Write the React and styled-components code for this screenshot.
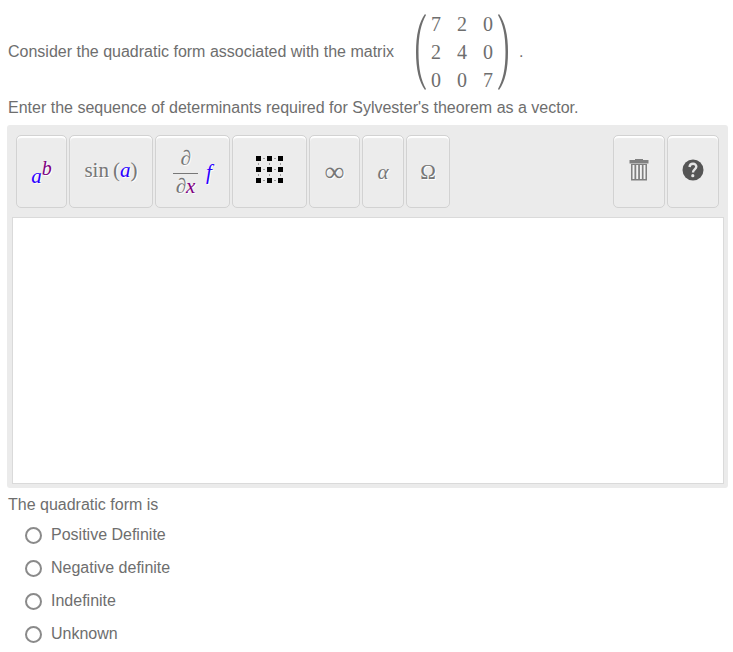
import React, { useState } from "react";
import styled, { createGlobalStyle } from "styled-components";

const GlobalStyle = createGlobalStyle`
  * {
    box-sizing: border-box;
  }

  body {
    margin: 0;
    background: #fff;
    color: #6e6e6e;
    font-family: "Liberation Sans", Arial, sans-serif;
    font-size: 16px;
    line-height: 24px;
  }
`;

const Page = styled.main`
  padding: 13px 5px 0 8px;
`;

const Statement = styled.div`
  display: flex;
  align-items: center;
  gap: 10px;
  height: 78px;
`;

const Prompt = styled.p`
  margin: 0;
  padding: ${({ $top }) => $top || 0}px 0 0;
`;

const MatrixBox = styled.div`
  display: flex;
  align-items: center;
  gap: 3px;
  padding-left: 11px;
`;

const Matrix = styled.div`
  display: grid;
  grid-template-columns: repeat(3, 14px);
  grid-auto-rows: 28px;
  column-gap: 12px;
  justify-items: center;
  align-items: center;
  font-family: "Liberation Serif", "Times New Roman", serif;
  font-size: 20px;
`;

const Editor = styled.section`
  margin: 5px 0 0 -1px;
  padding: 10px 4px 4px 5px;
  background: #ebebeb;
  border-radius: 3px;
`;

const Toolbar = styled.div`
  display: flex;
  justify-content: space-between;
  padding: 0 5px 9px 4px;
`;

const ToolGroup = styled.div`
  display: flex;
  gap: 2px;
`;

const ToolButton = styled.button`
  display: flex;
  align-items: center;
  justify-content: center;
  width: ${({ $width }) => $width}px;
  height: 73px;
  padding: 0 0 ${({ $raised }) => ($raised ? 4 : 0)}px;
  color: #777;
  background: #ececec;
  border: 1px solid #d2d2d2;
  border-radius: 5px;
  box-shadow: inset 0 2px 1px #fff;
  font-family: "Liberation Serif", "Times New Roman", serif;
  font-size: ${({ $large }) => ($large ? 28 : 21)}px;
  line-height: 24px;
  text-shadow: 1px 1px 0 #fff;
  cursor: pointer;
`;

const Variable = styled.i`
  color: ${({ $second }) => ($second ? "#800080" : "#2b00ff")};
`;

const Power = styled.sup`
  align-self: center;
  padding-bottom: 8px;
  font-size: 20px;
  line-height: 20px;
`;

const Base = styled.span`
  padding-top: 8px;
`;

const Fraction = styled.span`
  display: flex;
  flex-direction: column;
  align-items: center;
  width: 25px;
  margin-right: 8px;
`;

const Numerator = styled.span`
  width: 100%;
  height: 28px;
  border-bottom: 1px solid #777;
`;

const InputArea = styled.textarea`
  display: block;
  width: 100%;
  height: 267px;
  padding: 8px;
  background: #fff;
  border: 1px solid #dadada;
  border-radius: 0;
  outline: none;
  resize: none;
  font: inherit;
  color: inherit;
`;

const Choices = styled.fieldset`
  margin: 0;
  padding: 6px 0 0;
  border: 0;
`;

const Legend = styled.legend`
  padding: 5px 0 0;
`;

const Choice = styled.label`
  display: flex;
  align-items: center;
  gap: 9px;
  width: fit-content;
  margin: 0 0 9px 17px;
`;

const Radio = styled.input`
  appearance: none;
  width: 17px;
  height: 17px;
  margin: 0;
  background: #fff;
  border: 2px solid #8a8a8a;
  border-radius: 50%;

  &:checked {
    background: #767676;
    box-shadow: inset 0 0 0 3px #fff;
  }
`;

const values = [7, 2, 0, 2, 4, 0, 0, 0, 7];
const answers = ["Positive Definite", "Negative definite", "Indefinite", "Unknown"];

const Bracket = ({ right }) => (
  <svg width="11" height="76" viewBox="0 0 11 76" aria-hidden="true">
    <path
      transform={right ? "translate(11 0) scale(-1 1)" : undefined}
      d="M10 0C4 8 1 21 1 38s3 30 9 38l1-1C6 66 3.500 55 3.500 38S6 10 11 1z"
      fill="#6e6e6e"
    />
  </svg>
);

const MatrixIcon = () => (
  <svg width="28" height="28" viewBox="0 0 28 28" aria-hidden="true">
    {[0, 11, 22].map((y) =>
      [0, 11, 22].map((x) => (
        <rect key={`${x}-${y}`} x={x} y={y} width="5" height="5" fill="#000" />
      ))
    )}
    {[0, 11, 22].map((a) =>
      [7, 18].map((b) => (
        <g key={`${a}-${b}`} fill="#999">
          <rect x={b} y={a + 2} width="2" height="1" />
          <rect x={a + 2} y={b} width="1" height="2" />
        </g>
      ))
    )}
  </svg>
);

const TrashIcon = () => (
  <svg width="20" height="23" viewBox="0 0 20 23" aria-hidden="true">
    <path d="M6 2V1h8v1h5.500v3.500H.5V2z" fill="#808080" />
    <path d="M2 6h16v16.500H2z" fill="#808080" />
    <path d="M4.500 7v14M8.200 7v14M11.900 7v14M15.500 7v14" stroke="#f3f3f3" strokeWidth="1.900" />
  </svg>
);

const HelpIcon = () => (
  <svg width="22" height="22" viewBox="0 0 22 22" aria-hidden="true">
    <circle cx="11" cy="11" r="10.500" fill="#555" />
    <path
      d="M7.500 8C8 3.500 14.500 4 14.300 7.800c-.1 2.700-3.300 2.700-3.300 5.700"
      fill="none"
      stroke="#e4e4e4"
      strokeWidth="2.400"
    />
    <circle cx="10.800" cy="16.700" r="1.600" fill="#e4e4e4" />
  </svg>
);

const App = () => {
  const [answer, setAnswer] = useState("");

  return (
    <Page>
      <GlobalStyle />
      <Statement>
        <Prompt>Consider the quadratic form associated with the matrix</Prompt>
        <MatrixBox>
          <Bracket />
          <Matrix>
            {values.map((value, index) => (
              <span key={index}>{value}</span>
            ))}
          </Matrix>
          <Bracket right />
        </MatrixBox>
        <span>.</span>
      </Statement>
      <Prompt $top={5}>
        Enter the sequence of determinants required for Sylvester's theorem as a vector.
      </Prompt>

      <Editor>
        <Toolbar>
          <ToolGroup>
            <ToolButton $width={51} type="button">
              <Base><Variable>a</Variable></Base>
              <Power><Variable $second>b</Variable></Power>
            </ToolButton>
            <ToolButton $width={84} $raised type="button">
              <span>sin&thinsp;(<Variable>a</Variable>)</span>
            </ToolButton>
            <ToolButton $width={75} type="button">
              <Fraction>
                <Numerator>∂</Numerator>
                <span>∂<Variable $second>x</Variable></span>
              </Fraction>
              <Variable>f</Variable>
            </ToolButton>
            <ToolButton $width={75} $raised type="button" aria-label="Matrix">
              <MatrixIcon />
            </ToolButton>
            <ToolButton $width={51} $large type="button">∞</ToolButton>
            <ToolButton $width={42} type="button"><i>α</i></ToolButton>
            <ToolButton $width={44} type="button">Ω</ToolButton>
          </ToolGroup>
          <ToolGroup>
            <ToolButton $width={52} $raised type="button" aria-label="Clear">
              <TrashIcon />
            </ToolButton>
            <ToolButton $width={52} $raised type="button" aria-label="Help">
              <HelpIcon />
            </ToolButton>
          </ToolGroup>
        </Toolbar>
        <InputArea aria-label="Determinants" />
      </Editor>

      <Choices>
        <Legend>The quadratic form is</Legend>
        {answers.map((label) => (
          <Choice key={label}>
            <Radio
              type="radio"
              name="definiteness"
              checked={answer === label}
              onChange={() => setAnswer(label)}
            />
            {label}
          </Choice>
        ))}
      </Choices>
    </Page>
  );
};

export default App;
